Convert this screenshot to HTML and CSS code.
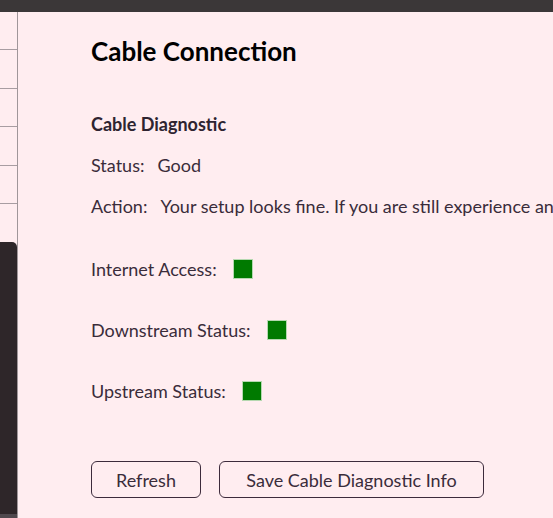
FILE: index.html
```html
<!DOCTYPE html>
<html>
<head>
<meta charset="utf-8">
<link rel="stylesheet" href="styles.css">
</head>
<body>
<div class="topbar"></div>
<div class="layout">
  <aside class="sidebar">
    <div class="nav-item"></div>
    <div class="nav-item"></div>
    <div class="nav-item"></div>
    <div class="nav-item"></div>
    <div class="nav-item"></div>
    <div class="nav-gap"></div>
    <div class="nav-dark"></div>
  </aside>
  <main class="main">
    <h1 class="title">Cable Connection</h1>
    <h2 class="subtitle">Cable Diagnostic</h2>
    <p class="line"><span class="label">Status:</span><span class="value">Good</span></p>
    <p class="line"><span class="label">Action:</span><span class="value">Your setup looks fine. If you are still experience any issues, please contact your service provider.</span></p>
    <div class="status-list">
      <div class="status-row"><span>Internet Access:</span><span class="indicator"></span></div>
      <div class="status-row"><span>Downstream Status:</span><span class="indicator"></span></div>
      <div class="status-row"><span>Upstream Status:</span><span class="indicator"></span></div>
    </div>
    <div class="actions">
      <button class="btn btn-refresh">Refresh</button>
      <button class="btn btn-save">Save Cable Diagnostic Info</button>
    </div>
  </main>
</div>
</body>
</html>
```
FILE: styles.css
```css
html, body {
  margin: 0;
  padding: 0;
  height: 100%;
  overflow: hidden;
}
body {
  background: #ffedf0;
  font-family: Lato, "Open Sans", sans-serif;
  color: #3a2c3a;
}
.topbar {
  height: 12px;
  background: #3b3738;
}
.layout {
  display: flex;
  height: calc(100% - 12px);
}
.sidebar {
  width: 18px;
  flex: none;
  display: flex;
  flex-direction: column;
  border-right: 1px solid #a0969a;
  box-sizing: border-box;
}
.nav-item {
  height: 38.5px;
  border-bottom: 1px solid #a89da2;
  box-sizing: border-box;
  flex: none;
}
.nav-item:first-child { height: 38px; }
.nav-gap { height: 38px; flex: none; }
.nav-dark {
  flex: 1;
  background: #2e2629;
  border-top-right-radius: 5px;
  border-bottom: 4px solid #4f484d;
}
.main {
  flex: 1;
  padding-left: 73px;
  white-space: nowrap;
  overflow: hidden;
}
.title {
  margin: 23px 0 0;
  font-size: 26px;
  font-weight: 700;
  color: #000;
  line-height: 32px;
}
.subtitle {
  margin: 45px 0 0;
  font-size: 18px;
  font-weight: 700;
  line-height: 24px;
  color: #2e2430;
}
.line {
  margin: 17px 0 0;
  font-size: 18px;
  line-height: 24px;
}
.label { margin-right: 13px; }
.status-list {
  margin-top: 39px;
  display: flex;
  flex-direction: column;
  gap: 37px;
}
.status-row {
  display: flex;
  align-items: center;
  gap: 17px;
  font-size: 18px;
  line-height: 24px;
}
.indicator {
  width: 18px;
  height: 18px;
  background: #007a00;
  box-shadow: 0 0 0 1px #b5d8b0;
}
.actions {
  margin-top: 58px;
  display: flex;
  gap: 18px;
}
.btn {
  height: 37px;
  background: transparent;
  border: 1px solid #3d2b3c;
  border-radius: 6px;
  font-family: inherit;
  font-size: 18px;
  color: #3a2c3a;
  padding: 0;
}
.btn-refresh { width: 110px; }
.btn-save { width: 265px; }
```
